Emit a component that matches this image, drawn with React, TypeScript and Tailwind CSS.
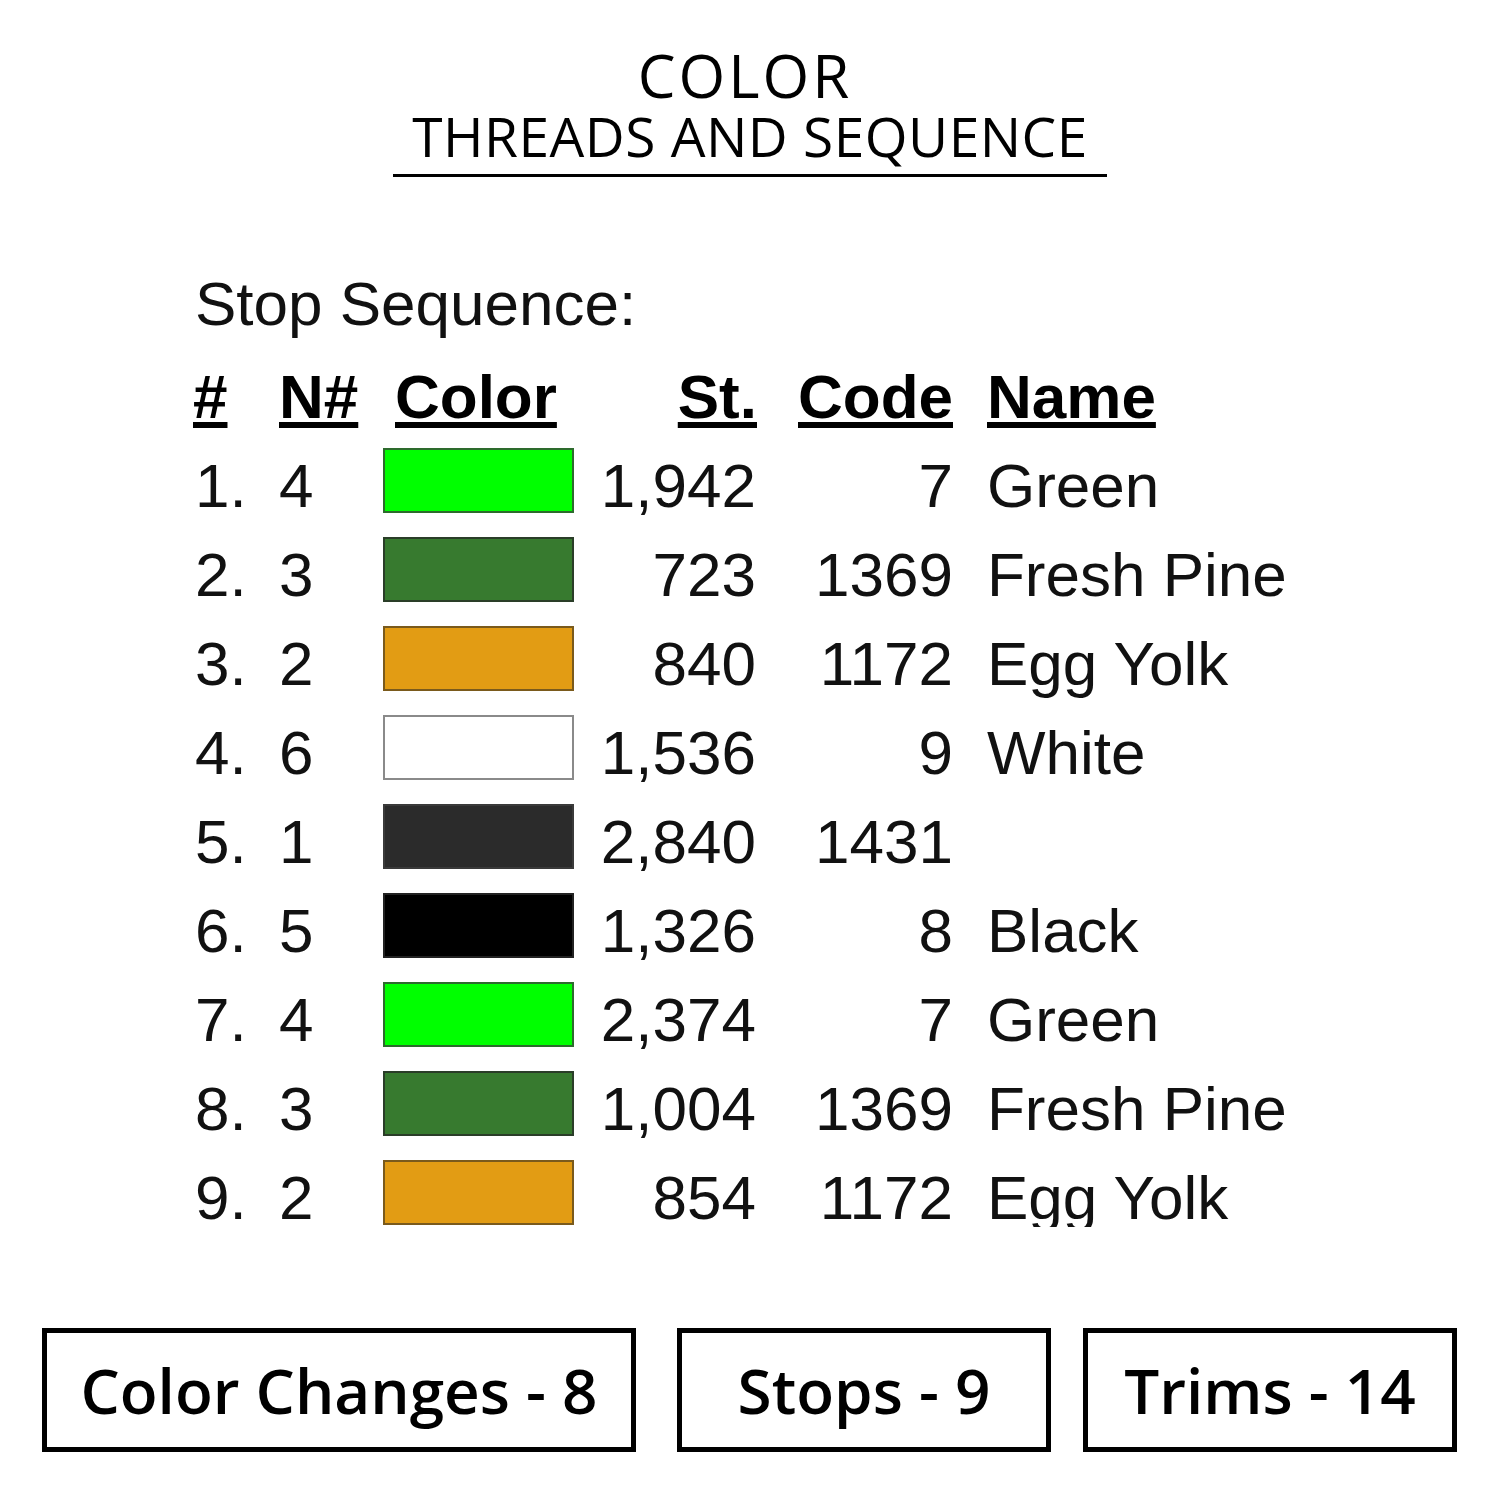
const rows = [
  { i: "1.", n: "4", fill: "bg-[#00ff00]", border: "border-[#2d6b2d]", st: "1,942", code: "7", name: "Green" },
  { i: "2.", n: "3", fill: "bg-[#377a2f]", border: "border-[#2a3d28]", st: "723", code: "1369", name: "Fresh Pine" },
  { i: "3.", n: "2", fill: "bg-[#e29c14]", border: "border-[#7a5a1c]", st: "840", code: "1172", name: "Egg Yolk" },
  { i: "4.", n: "6", fill: "bg-white", border: "border-[#8a8a8a]", st: "1,536", code: "9", name: "White" },
  { i: "5.", n: "1", fill: "bg-[#2b2b2b]", border: "border-[#3a3a3a]", st: "2,840", code: "1431", name: "" },
  { i: "6.", n: "5", fill: "bg-black", border: "border-[#222]", st: "1,326", code: "8", name: "Black" },
  { i: "7.", n: "4", fill: "bg-[#00ff00]", border: "border-[#2d6b2d]", st: "2,374", code: "7", name: "Green" },
  { i: "8.", n: "3", fill: "bg-[#377a2f]", border: "border-[#2a3d28]", st: "1,004", code: "1369", name: "Fresh Pine" },
  { i: "9.", n: "2", fill: "bg-[#e29c14]", border: "border-[#7a5a1c]", st: "854", code: "1172", name: "Egg Yolk" },
];

const gridCols = "grid grid-cols-[86px_104px_200px_174px_196px_1fr]";

export default function App() {
  return (
    <div className="w-[1500px] h-[1500px] bg-white flex flex-col items-center text-black">
      <div className="mt-[45px] font-['Open_Sans',sans-serif] font-medium text-[60px] leading-none tracking-[3px] mr-[10px]">
        COLOR
      </div>
      <div className="mt-[3px] border-b-[3px] border-black px-[19px] pb-[11px] font-['Open_Sans',sans-serif] font-normal text-[55px] leading-none tracking-[0.5px]">
        THREADS AND SEQUENCE
      </div>

      <div className="self-start ml-[193px] mt-[82px] h-[968px] overflow-hidden font-['Liberation_Sans',Arial,sans-serif] text-[62px] text-[#111]">
        <div className="h-[89px] leading-[89px] ml-[2px] mb-[4px]">Stop Sequence:</div>
        <div className={`${gridCols} h-[89px] leading-[89px] font-bold text-black`}>
          <div><span className="underline decoration-[6px] underline-offset-[4px]">#</span></div>
          <div><span className="underline decoration-[6px] underline-offset-[4px]">N#</span></div>
          <div className="pl-[12px]"><span className="underline decoration-[6px] underline-offset-[4px]">Color</span></div>
          <div className="text-right"><span className="underline decoration-[6px] underline-offset-[4px]">St.</span></div>
          <div className="text-right"><span className="underline decoration-[6px] underline-offset-[4px]">Code</span></div>
          <div className="pl-[34px]"><span className="underline decoration-[6px] underline-offset-[4px]">Name</span></div>
        </div>
        {rows.map((r, idx) => (
          <div key={idx} className={`${gridCols} h-[89px] leading-[89px] whitespace-nowrap`}>
            <div className="pl-[2px]">{r.i}</div>
            <div>{r.n}</div>
            <div className="pt-[7px]">
              <div className={`w-[191px] h-[65px] border-2 ${r.fill} ${r.border}`} />
            </div>
            <div className="text-right pr-[1px]">{r.st}</div>
            <div className="text-right">{r.code}</div>
            <div className="pl-[34px]">{r.name}</div>
          </div>
        ))}
      </div>

      <div className="self-start ml-[42px] mt-[101px] flex font-['Open_Sans',sans-serif] font-semibold text-[62px] leading-none">
        <div className="w-[594px] h-[124px] border-[5px] border-black flex items-center justify-center">
          Color Changes - 8
        </div>
        <div className="ml-[41px] w-[374px] h-[124px] border-[5px] border-black flex items-center justify-center">
          Stops - 9
        </div>
        <div className="ml-[32px] w-[374px] h-[124px] border-[5px] border-black flex items-center justify-center">
          Trims - 14
        </div>
      </div>
    </div>
  );
}
